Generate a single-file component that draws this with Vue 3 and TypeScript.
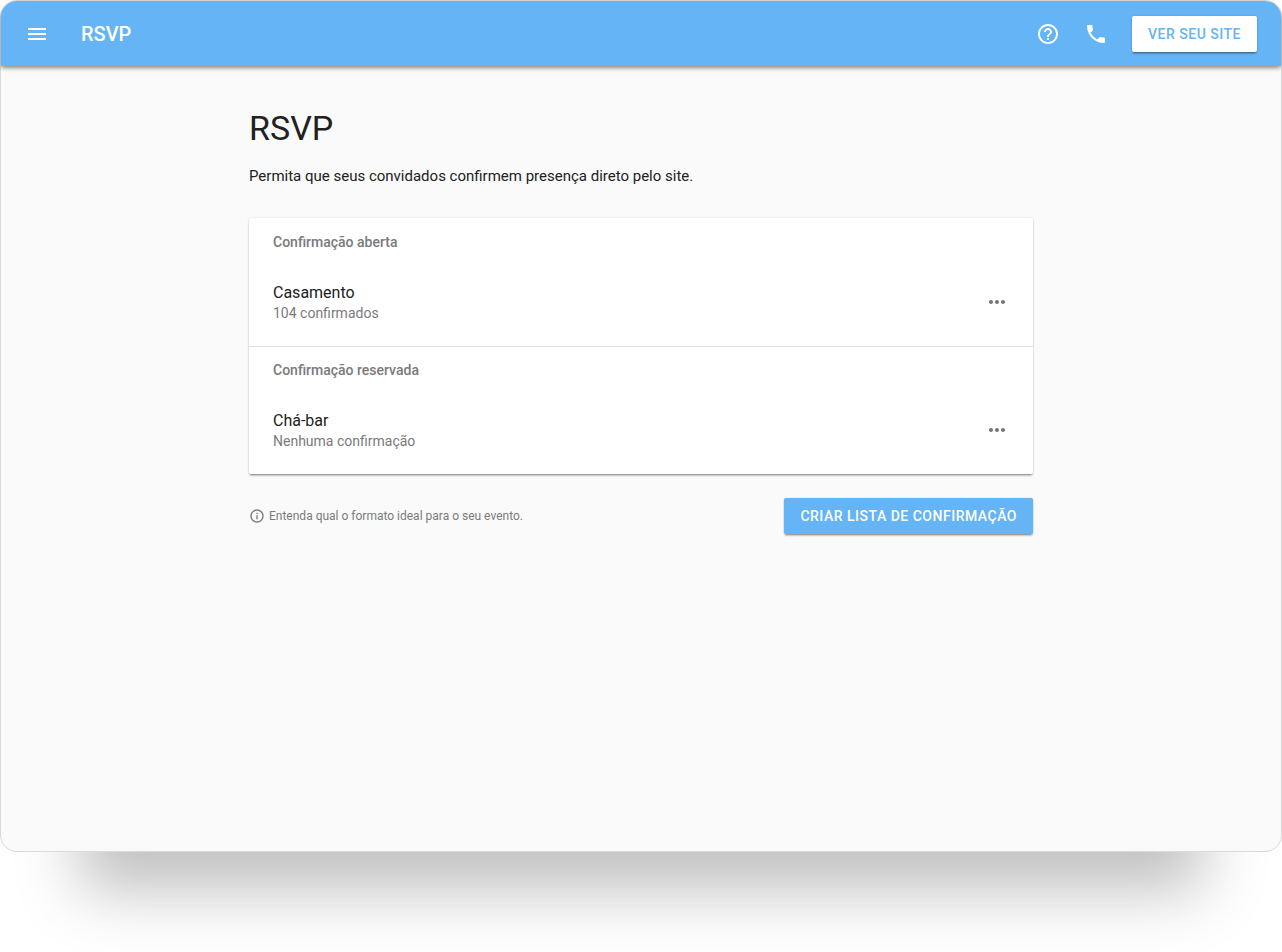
<script setup lang="ts">
interface Guestlist {
  id: string
  group: string
  name: string
  status: string
}

const lists: Guestlist[] = [
  { id: 'casamento', group: 'Confirmação aberta', name: 'Casamento', status: '104 confirmados' },
  { id: 'cha-bar', group: 'Confirmação reservada', name: 'Chá-bar', status: 'Nenhuma confirmação' },
]
</script>

<template>
  <div class="page">
    <div class="window">
      <header class="toolbar">
        <button class="icon-button" type="button" aria-label="Menu">
          <svg viewBox="0 0 24 24"><path d="M3 18h18v-2H3v2zm0-5h18v-2H3v2zm0-7v2h18V6H3z" /></svg>
        </button>
        <span class="toolbar-title">RSVP</span>
        <div class="toolbar-actions">
          <button class="icon-button" type="button" aria-label="Ajuda">
            <svg viewBox="0 0 24 24"><path d="M11 18h2v-2h-2v2zm1-16C6.48 2 2 6.48 2 12s4.48 10 10 10 10-4.48 10-10S17.52 2 12 2zm0 18c-4.41 0-8-3.59-8-8s3.59-8 8-8 8 3.59 8 8-3.59 8-8 8zm0-14c-2.21 0-4 1.79-4 4h2c0-1.1.9-2 2-2s2 .9 2 2c0 2-3 1.75-3 5h2c0-2.25 3-2.5 3-5 0-2.21-1.79-4-4-4z" /></svg>
          </button>
          <button class="icon-button" type="button" aria-label="Telefone">
            <svg viewBox="0 0 24 24"><path d="M6.62 10.79c1.44 2.83 3.76 5.14 6.59 6.59l2.2-2.2c.27-.27.67-.36 1.02-.24 1.12.37 2.33.57 3.57.57.55 0 1 .45 1 1V20c0 .55-.45 1-1 1-9.39 0-17-7.61-17-17 0-.55.45-1 1-1h3.5c.55 0 1 .45 1 1 0 1.25.2 2.45.57 3.57.11.35.03.74-.25 1.02l-2.2 2.2z" /></svg>
          </button>
          <a class="button button-light" href="#site">VER SEU SITE</a>
        </div>
      </header>

      <main class="content">
        <h1>RSVP</h1>
        <p class="intro">Permita que seus convidados confirmem presença direto pelo site.</p>

        <div class="card">
          <section v-for="list in lists" :key="list.id" class="group">
            <h2>{{ list.group }}</h2>
            <div class="row">
              <div class="row-text">
                <div class="name">{{ list.name }}</div>
                <div class="status">{{ list.status }}</div>
              </div>
              <button class="icon-button more" type="button" :aria-label="`Opções de ${list.name}`">
                <svg viewBox="0 0 24 24"><path d="M6 10c-1.1 0-2 .9-2 2s.9 2 2 2 2-.9 2-2-.9-2-2-2zm12 0c-1.1 0-2 .9-2 2s.9 2 2 2 2-.9 2-2-.9-2-2-2zm-6 0c-1.1 0-2 .9-2 2s.9 2 2 2 2-.9 2-2-.9-2-2-2z" /></svg>
              </button>
            </div>
          </section>
        </div>

        <div class="footer">
          <a class="hint" href="#formatos">
            <svg viewBox="0 0 24 24"><path d="M11 7h2v2h-2V7zm0 4h2v6h-2v-6zm1-9C6.48 2 2 6.48 2 12s4.48 10 10 10 10-4.48 10-10S17.52 2 12 2zm0 18c-4.41 0-8-3.59-8-8s3.59-8 8-8 8 3.59 8 8-3.59 8-8 8z" /></svg>
            <span>Entenda qual o formato ideal para o seu evento.</span>
          </a>
          <button class="button button-primary" type="button">CRIAR LISTA DE CONFIRMAÇÃO</button>
        </div>
      </main>
    </div>
  </div>
</template>

<style>
body {
  margin: 0;
  background: #fff;
}
</style>

<style scoped>
.page {
  box-sizing: border-box;
  display: flex;
  min-height: 100vh;
  padding-bottom: 100px;
  overflow: hidden;
  font-family: Roboto, "Liberation Sans", sans-serif;
  color: #212121;
}

.window {
  box-sizing: border-box;
  flex: 1;
  min-width: 0;
  border: 1px solid #d9d9d9;
  border-radius: 17px;
  background: #fafafa;
  box-shadow: 0 118px 60px -80px rgba(0, 0, 0, 0.25);
}

.toolbar {
  box-sizing: border-box;
  display: flex;
  align-items: center;
  height: 65px;
  padding: 1px 24px 0 12px;
  border-radius: 16px 16px 0 0;
  background: #64b4f6;
  color: #fff;
  box-shadow: 0 2px 4px -1px rgba(0, 0, 0, 0.4), 0 3px 4px rgba(0, 0, 0, 0.16);
}

.icon-button {
  display: flex;
  align-items: center;
  justify-content: center;
  width: 48px;
  height: 48px;
  padding: 0;
  border: 0;
  background: none;
  color: inherit;
  cursor: pointer;
}

svg {
  display: block;
  width: 24px;
  height: 24px;
  fill: currentColor;
}

.toolbar-title {
  margin-left: 20px;
  font-size: 20px;
  font-weight: 500;
  line-height: 32px;
}

.toolbar-actions {
  display: flex;
  align-items: center;
  margin-left: auto;
}

.button {
  box-sizing: border-box;
  height: 36px;
  padding: 0 16px;
  border: 0;
  border-radius: 2px;
  font-family: inherit;
  font-size: 14px;
  font-weight: 500;
  line-height: 36px;
  letter-spacing: 0.036em;
  text-decoration: none;
  white-space: nowrap;
  cursor: pointer;
  box-shadow: 0 3px 1px -2px rgba(0, 0, 0, 0.2), 0 2px 2px rgba(0, 0, 0, 0.2), 0 0 2px rgba(0, 0, 0, 0.14);
}

.button-light {
  margin-left: 12px;
  background: #fff;
  color: #64b4f6;
}

.button-primary {
  background: #64b4f6;
  color: #fff;
}

.content {
  box-sizing: border-box;
  max-width: 832px;
  margin: 0 auto;
  padding: 42px 24px;
}

h1 {
  margin: 0;
  font-size: 34px;
  font-weight: 400;
  line-height: 40px;
}

.intro {
  margin: 16px 0 30px;
  font-size: 15px;
  line-height: 24px;
}

.card {
  border-radius: 2px;
  background: #fff;
  box-shadow: 0 3px 1px -2px rgba(0, 0, 0, 0.2), 0 2px 2px rgba(0, 0, 0, 0.2), 0 0 2px rgba(0, 0, 0, 0.14);
}

.group + .group {
  box-shadow: inset 0 1px #e0e0e0;
}

h2 {
  margin: 0;
  padding: 0 24px;
  color: #7a7a7a;
  font-size: 14px;
  font-weight: 500;
  line-height: 48px;
}

.row {
  display: flex;
  align-items: flex-start;
  justify-content: space-between;
  height: 80px;
  padding: 0 12px 0 24px;
  box-sizing: border-box;
}

.row-text {
  padding-top: 16px;
}

.name {
  font-size: 16px;
  line-height: 22px;
}

.status {
  color: #7a7a7a;
  font-size: 14px;
  line-height: 18px;
}

.more {
  margin-top: 12px;
  color: #757575;
}

.footer {
  display: flex;
  align-items: center;
  justify-content: space-between;
  margin-top: 24px;
}

.hint {
  display: flex;
  align-items: center;
  gap: 4px;
  color: #7a7a7a;
  font-size: 12px;
  line-height: 20px;
  text-decoration: none;
}

.hint svg {
  width: 16px;
  height: 16px;
}
</style>
